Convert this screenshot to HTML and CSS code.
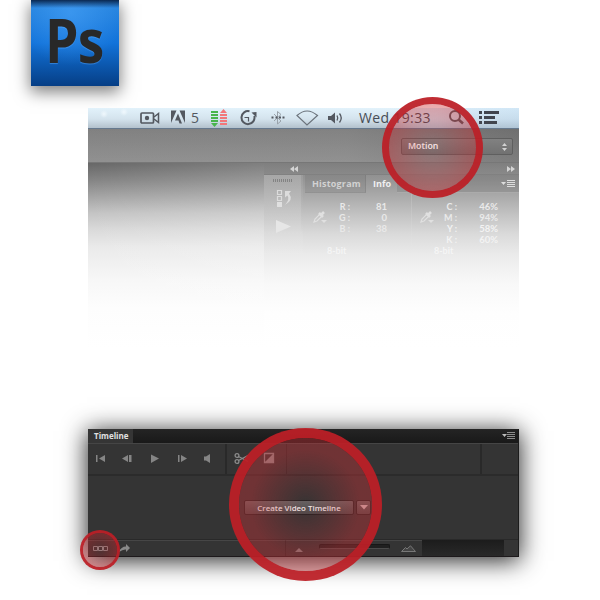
FILE: index.html
```html
<!DOCTYPE html>
<html lang="en">
<head>
<meta charset="utf-8">
<title>Photoshop timeline</title>
<link rel="stylesheet" href="styles.css">
</head>
<body>
<main class="page">
  <div class="logo"><span>Ps</span></div>

  <section class="app">
    <div class="menubar">
      <svg class="menu-icons" width="98" height="20" viewBox="0 0 98 20">
        <rect x="1" y="5" width="12.500" height="10" rx="1" fill="none" stroke="#535860" stroke-width="1.700"/>
        <path d="M14 9L18.500 5.500V14.500L14 11" fill="none" stroke="#535860" stroke-width="1.500"/>
        <circle cx="7" cy="10" r="2.200" fill="#535860"/>
        <path d="M31 2.500H36.500L31 15ZM45 2.500H39.500L45 15ZM38 5.500L42 15.500H39.500L38.500 12.500H35Z" fill="#535860"/>
        <path d="M71 4H78M71 7H78M71 10H78M71 13H78" stroke="#48b54c" stroke-width="2"/>
        <path d="M71 15H78L74.500 19Z" fill="#48b54c"/>
        <path d="M80 7H87M80 10H87M80 13H87M80 16H87" stroke="#f2777a" stroke-width="2"/>
        <path d="M80 5H87L83.500 1Z" fill="#f2777a"/>
      </svg>
      <span class="count">5</span>
      <svg class="status-icons" width="110" height="20" viewBox="0 0 110 20">
        <path d="M10.500 3.300A6.500 6.500 0 1 0 15.300 8" fill="none" stroke="#535860" stroke-width="2"/>
        <path d="M12.500 4.500L17.500 4V9.500Z" fill="#535860"/>
        <path d="M5.500 9.500H9.500V13.500" fill="none" stroke="#535860" stroke-width="1.200"/>
        <path d="M35 6L42 13L38.500 16V3.500L42 6.500L35 13" fill="none" stroke="#9aa3ab"/>
        <path d="M32.500 9.500H34.500M36.500 9.500H38.500M40 9.500H42M43.500 9.500H45.500" stroke="#535860" stroke-width="2.200"/>
        <path d="M58 7.500Q68 -1.500 78.500 7.500L68 17Z" fill="none" stroke="#6b737b" stroke-width="1.200"/>
        <path d="M89 8H92L96 4.500V15.500L92 12H89Z" fill="#535860"/>
        <path d="M98 7.500Q99.500 10 98 12.500M100.500 5.500Q104 10 100.500 14.500" fill="none" stroke="#535860" stroke-width="1.300"/>
      </svg>
      <span class="clock">Wed 19:33</span>
      <svg class="search-icons" width="53" height="20" viewBox="0 0 53 20">
        <circle cx="7" cy="8" r="5" fill="none" stroke="#535860" stroke-width="2"/>
        <path d="M10.500 11.500L15 15.500" stroke="#535860" stroke-width="2.700"/>
        <path d="M31 4.500H34M36 4.500H51M31 9.500H34M36 9.500H47M31 14.500H34M36 14.500H49" stroke="#41454e" stroke-width="3"/>
      </svg>
    </div>
    <div class="optionsbar">
      <div class="workspace"><span>Motion</span>
        <svg width="7" height="10" viewBox="0 0 7 10"><path d="M1 4L3.500 1L6 4ZM1 6L3.500 9L6 6Z" fill="#d2d2d2"/></svg>
      </div>
    </div>
    <div class="workarea">
      <div class="canvas"></div>
      <div class="dock">
        <div class="collapse">
          <svg width="8" height="6" viewBox="0 0 8 6"><path d="M4 0V6L0 3ZM8 0V6L4 3Z" fill="#d4d4d4"/></svg>
          <svg width="8" height="6" viewBox="0 0 8 6"><path d="M0 0V6L4 3ZM4 0V6L8 3Z" fill="#d4d4d4"/></svg>
        </div>
        <div class="panels">
          <div class="iconcol">
            <svg width="38" height="80" viewBox="0 0 38 80">
              <path d="M9 5.500H29" stroke="#838383" stroke-width="3" stroke-dasharray="1 1"/>
              <path d="M13.500 15.500H17.500V19.500H13.500ZM13.500 21.500H17.500V25.500H13.500Z" fill="none" stroke="#dcdcdc" stroke-width="1.200"/>
              <path d="M13 27H18V32H13Z" fill="#e0e0e0"/>
              <path d="M21 16H27L25 18.500Q30 25 21 30Q26 24 23.500 20.500L21 22.500Z" fill="#dcdcdc"/>
              <path d="M12 45L27 51.500L12 58Z" fill="#e6e6e6"/>
            </svg>
          </div>
          <div class="info">
            <div class="tabs">
              <span class="tab histogram">Histogram</span><span class="tab current">Info</span>
              <span class="tabfill"><svg width="14" height="8" viewBox="0 0 14 8"><path d="M0 2H5L2.500 5Z" fill="#ddd"/><path d="M6 .5H14M6 2.500H14M6 4.500H14M6 6.500H14" stroke="#ddd"/></svg></span>
            </div>
            <div class="readouts">
              <div class="readout">
                <svg class="dropper" width="14" height="14" viewBox="0 0 14 14"><path d="M1 12L2 9L7 4L9 6L4 11Z" fill="none" stroke="#e0e0e0" stroke-width="1.200"/><path d="M6 3L10 7M8 5L11 2" stroke="#e0e0e0" stroke-width="2.600"/><path d="M8 10H14L11 13Z" fill="#e0e0e0"/></svg>
                <div class="labels"><b>R :</b><b>G :</b><b>B :</b></div>
                <div class="values"><b>81</b><b>0</b><b>38</b></div>
                <b class="depth">8-bit</b>
              </div>
              <div class="readout cmyk">
                <svg class="dropper" width="14" height="14" viewBox="0 0 14 14"><path d="M1 12L2 9L7 4L9 6L4 11Z" fill="none" stroke="#e0e0e0" stroke-width="1.200"/><path d="M6 3L10 7M8 5L11 2" stroke="#e0e0e0" stroke-width="2.600"/><path d="M8 10H14L11 13Z" fill="#e0e0e0"/></svg>
                <div class="labels"><b>C :</b><b>M :</b><b class="faded">Y :</b><b class="faded">K :</b></div>
                <div class="values"><b>46%</b><b>94%</b><b class="faded">58%</b><b class="faded">60%</b></div>
                <b class="depth">8-bit</b>
              </div>
            </div>
          </div>
        </div>
      </div>
    </div>
  </section>

  <section class="timeline">
    <div class="tl-head">
      <span class="tl-tab">Timeline</span>
      <svg width="13" height="8" viewBox="0 0 13 8"><path d="M0 2H5L2.500 5Z" fill="#bbb"/><path d="M5 .5H13M5 2.500H13M5 4.500H13M5 6.500H13" stroke="#8d8d8d"/></svg>
    </div>
    <div class="tl-tools">
      <div class="transport">
        <svg width="138" height="30" viewBox="0 0 138 30">
          <g fill="#858585">
            <path d="M8 11H9.500V18H8ZM17 11V18L11 14.500Z"/>
            <path d="M40 11V18L34 14.500ZM41 11H43.500V18H41Z"/>
            <path d="M63 10.500V19L71 14.500Z"/>
            <path d="M90 11H91.500V18H90ZM93 11V18L99 14.500Z"/>
            <path d="M116 12.500H118L122 10V19L118 16.500H116Z"/>
          </g>
        </svg>
      </div>
      <div class="edit">
        <svg width="58" height="30" viewBox="0 0 58 30">
          <g fill="none" stroke="#8b8b8b" stroke-width="1.300"><circle cx="10" cy="11.500" r="1.900"/><circle cx="10" cy="17.500" r="1.900"/><path d="M11.500 12.500L21 17.500M11.500 16.500L21 11.500"/><path d="M37.500 9.500H46.500V18.500H37.500Z"/></g>
          <path d="M46 10V18H38Z" fill="#8d8d8d"/>
        </svg>
      </div>
      <div class="tl-track"></div>
      <div class="tl-end"></div>
    </div>
    <div class="tl-body">
      <span class="create">Create Video Timeline</span>
      <span class="drop"><svg width="8" height="5" viewBox="0 0 8 5"><path d="M0 0H8L4 4.500Z" fill="#d5c5c5"/></svg></span>
    </div>
    <div class="tl-foot">
      <div class="foot-left">
        <svg width="50" height="15" viewBox="0 0 50 15"><path d="M5.500 5.500H9.500V9.500H5.500ZM10.500 5.500H14.500V9.500H10.500ZM15.500 5.500H19.500V9.500H15.500Z" fill="none" stroke="#8c8c8c"/><path d="M31 11Q33 5.500 38 5.500V3L42 7L38 11V8.500Q35 8 31 11Z" fill="#898989"/></svg>
      </div>
      <div class="foot-zoom">
        <svg width="8" height="4" viewBox="0 0 8 4"><path d="M0 4L3 1L4 0L8 4Z" fill="#808080"/></svg>
        <span class="slider"></span>
        <svg width="15" height="7" viewBox="0 0 15 7"><path d="M.5 6.500L4.500 2.500L6 4L9.500 .8L14.500 6.500Z" fill="#444" stroke="#777"/></svg>
      </div>
      <div class="foot-scroll"></div>
    </div>
  </section>

  <div class="ring ring-workspace"></div>
  <div class="ring ring-create"></div>
  <div class="ring ring-frames"></div>
</main>
</body>
</html>
```
FILE: styles.css
```css
* { box-sizing: border-box; }
body { margin: 0; background: #fff; font-family: "Open Sans", "Noto Sans", sans-serif; }
svg { display: block; flex: none; }
.page { position: relative; width: 600px; height: 600px; overflow: hidden; }

.logo {
  width: 88px; height: 86px; margin-left: 31px; padding-left: 14px;
  background:
    linear-gradient(rgba(0,15,45,.8), rgba(0,15,45,0) 8px),
    radial-gradient(circle at 45% 15%, rgba(80,170,255,.5), rgba(80,170,255,0) 60%),
    linear-gradient(#2b87df, #1273da 50%, #063e85);
  box-shadow: 0 5px 15px 1px rgba(0,0,0,.5);
}
.logo span {
  display: block; color: #282828; font: 700 60px/81px "Open Sans", sans-serif;
  letter-spacing: -1px; transform: scaleX(.89); transform-origin: 0 50%;
  text-shadow: 0 1px 1px rgba(90,170,255,.5);
}

.app { width: 431px; height: 242px; margin: 22px 0 0 88px; }
.menubar {
  display: flex; height: 21px; padding-left: 52px; border-bottom: 1px solid #66798e;
  background:
    radial-gradient(circle at 16px 6px, rgba(245,251,255,.8), rgba(255,255,255,0) 4px),
    radial-gradient(circle at 36px 4px, rgba(245,251,255,.8), rgba(255,255,255,0) 4px),
    linear-gradient(90deg, rgba(255,255,255,0) 300px, rgba(170,205,235,.3)),
    linear-gradient(#e2f2fb, #d4e3ed 55%, #b3c1cc);
}
.menu-icons { margin-right: -47px; }
.count { width: 10px; margin-right: 38px; font-size: 14px; line-height: 20px; color: #535860; }
.clock {
  width: 74px; margin-left: 10px; color: #484d56; font: 14px/20px "Open Sans", sans-serif;
  letter-spacing: .35px; white-space: nowrap;
}
.search-icons { margin-left: 15px; }
.optionsbar {
  display: flex; justify-content: flex-end; height: 34px; padding: 9px 6px 0 0;
  border-bottom: 1px solid #777;
  background: linear-gradient(90deg, rgba(150,150,150,.15), rgba(150,150,150,.2) 60%, rgba(70,70,70,.25)), linear-gradient(#7d7d7d, #909090);
}
.workspace {
  display: flex; align-items: center; justify-content: space-between;
  width: 112px; height: 17px; padding: 0 4px 0 6px; border: 1px solid #5f5f5f; border-radius: 2px;
  background: linear-gradient(#818181, #717171); color: #fff; font: 600 8.800px/14px "Open Sans", sans-serif;
}
.workspace span { margin-top: -2px; }
.workarea { display: flex; height: 187px; }
.canvas {
  width: 176px;
  background:
    linear-gradient(90deg, rgba(255,255,255,0), rgba(255,255,255,.16)),
    linear-gradient(#676767, #848484 17px, #a5a5a5 34px, #c4c4c4 50px, #dadada 67px, #eaeaea 84px, #f7f7f7 117px, #fdfdfd 145px, #fff 185px);
}
.dock {
  width: 255px;
  background: linear-gradient(#858585, #959595 16px, #ababab 34px, #c3c3c3 52px, #dadada 71px, #ebebeb 92px, #f8f8f8 120px, #fefefe 150px, #fff 185px);
}
.collapse {
  display: flex; align-items: center; justify-content: space-between; height: 12px; padding: 0 4px 0 26px;
  background: rgba(70,70,70,.08); border-bottom: 1px solid rgba(110,110,110,.3);
}
.panels { display: flex; }
.iconcol {
  width: 39px; height: 90px;
  background:
    linear-gradient(rgba(110,110,110,.2), rgba(130,130,130,0)) 100% 0 / 2px 60px no-repeat,
    linear-gradient(rgba(255,255,255,.2), rgba(255,255,255,0));
}
.info { flex: 1; }
.tabs { display: flex; height: 18px; margin-left: 2px; font: 700 9px/17px "Open Sans", sans-serif; color: #d2d2d2; }
.tab { padding-left: 7px; letter-spacing: .2px; }
.histogram { width: 61px; background: rgba(80,80,80,.13); border-right: 1px solid rgba(90,90,90,.2); border-bottom: 1px solid rgba(90,90,90,.12); }
.current { width: 31px; color: #f0f0f0; letter-spacing: 0; }
.tabfill { display: flex; flex: 1; justify-content: flex-end; padding: 5px 4px 0 0; background: rgba(80,80,80,.17); border-bottom: 1px solid rgba(255,255,255,.2); }
.readouts { display: flex; height: 70px; }
.readout {
  display: grid; grid-template-columns: 27px 10px 37px; grid-template-rows: 44px 11px;
  width: 108px; padding: 8px 0 0 10px; font: 9px/11px Lato, sans-serif; color: #e9e9e9;
}
.readout b { display: block; font-weight: 700; white-space: nowrap; }
.cmyk {
  grid-template-columns: 27px 10px 41px; padding-left: 9px; color: #eaeaea;
  background: linear-gradient(rgba(255,255,255,.15), rgba(255,255,255,0)) 0 0 / 1px 60px no-repeat;
}
.faded { color: #f3f3f3; }
.dropper { margin-top: 9px; }
.labels, .values { display: flex; flex-direction: column; align-items: flex-end; }
.values { font-size: 9.500px; }
.values b { height: 11px; }
.depth { grid-column: 1 / 4; padding-left: 14px; color: #f5f5f5; }

.timeline {
  width: 431px; height: 128px; margin: 79px 0 0 88px; border-bottom: 1px solid #1d191b; border-right: 1px solid #1c1c1c;
  background: #343434; box-shadow: 0 3px 23px 1px rgba(0,0,0,.85);
}
.tl-head { display: flex; justify-content: space-between; height: 14px; padding-right: 3px; background: linear-gradient(#242424, #191919); }
.tl-head svg { margin-top: 3px; }
.tl-tab { width: 45px; padding-left: 6px; background: #353535; color: #e1e1e1; font: 700 8px/13px "Open Sans", sans-serif; }
.tl-tools { display: flex; height: 33px; border-top: 1px solid #454545; border-bottom: 2px solid #2b2b2b; }
.transport { width: 139px; border-right: 2px solid #292929; }
.edit { width: 60px; border-right: 1px solid #292929; }
.tl-track { width: 195px; border-right: 2px solid #292929; }
.tl-end { flex: 1; }
.tl-body { display: flex; height: 63px; padding: 24px 0 0 156px; }
.create, .drop { height: 15px; border: 1px solid #222; border-radius: 2px; background: linear-gradient(#646464, #494949); }
.create { width: 110px; color: #f3eeee; text-align: center; font: 600 7.900px/14px "Open Sans", sans-serif; }
.drop { display: flex; align-items: center; justify-content: center; width: 15px; margin-left: 2px; }
.tl-foot { display: flex; height: 17px; border-top: 1px solid #292929; }
.foot-left { width: 198px; border-top: 1px solid #464646; border-right: 1px solid #282828; }
.foot-zoom { display: flex; width: 136px; border-top: 1px solid #464646; padding-left: 9px; }
.foot-zoom svg:first-child { margin-top: 7px; }
.slider { width: 71px; height: 5px; margin: 3px 11px 0 16px; border: 1px solid #171717; border-bottom-color: #4b4b4b; border-radius: 2px; background: #202020; }
.foot-zoom svg:last-child { margin-top: 4px; }
.foot-scroll { width: 82px; background: linear-gradient(#1c1c1c, #292929); }

.ring { position: absolute; border-radius: 50%; border-style: solid; border-color: rgba(188,31,38,.94); }
.ring-workspace { left: 382px; top: 97px; width: 101px; height: 101px; border-width: 7px; background: radial-gradient(circle, rgba(200,40,45,.1), rgba(200,40,45,.4) 70%) padding-box; }
.ring-create { left: 229px; top: 428px; width: 153px; height: 153px; border-width: 10px; background: radial-gradient(circle, rgba(200,50,55,.02), rgba(195,50,55,.42) 58%) padding-box; }
.ring-frames { left: 80px; top: 530px; width: 40px; height: 40px; border-width: 3px; background: radial-gradient(circle, rgba(200,40,45,.18), rgba(200,40,45,.43) 70%) padding-box; }
```
